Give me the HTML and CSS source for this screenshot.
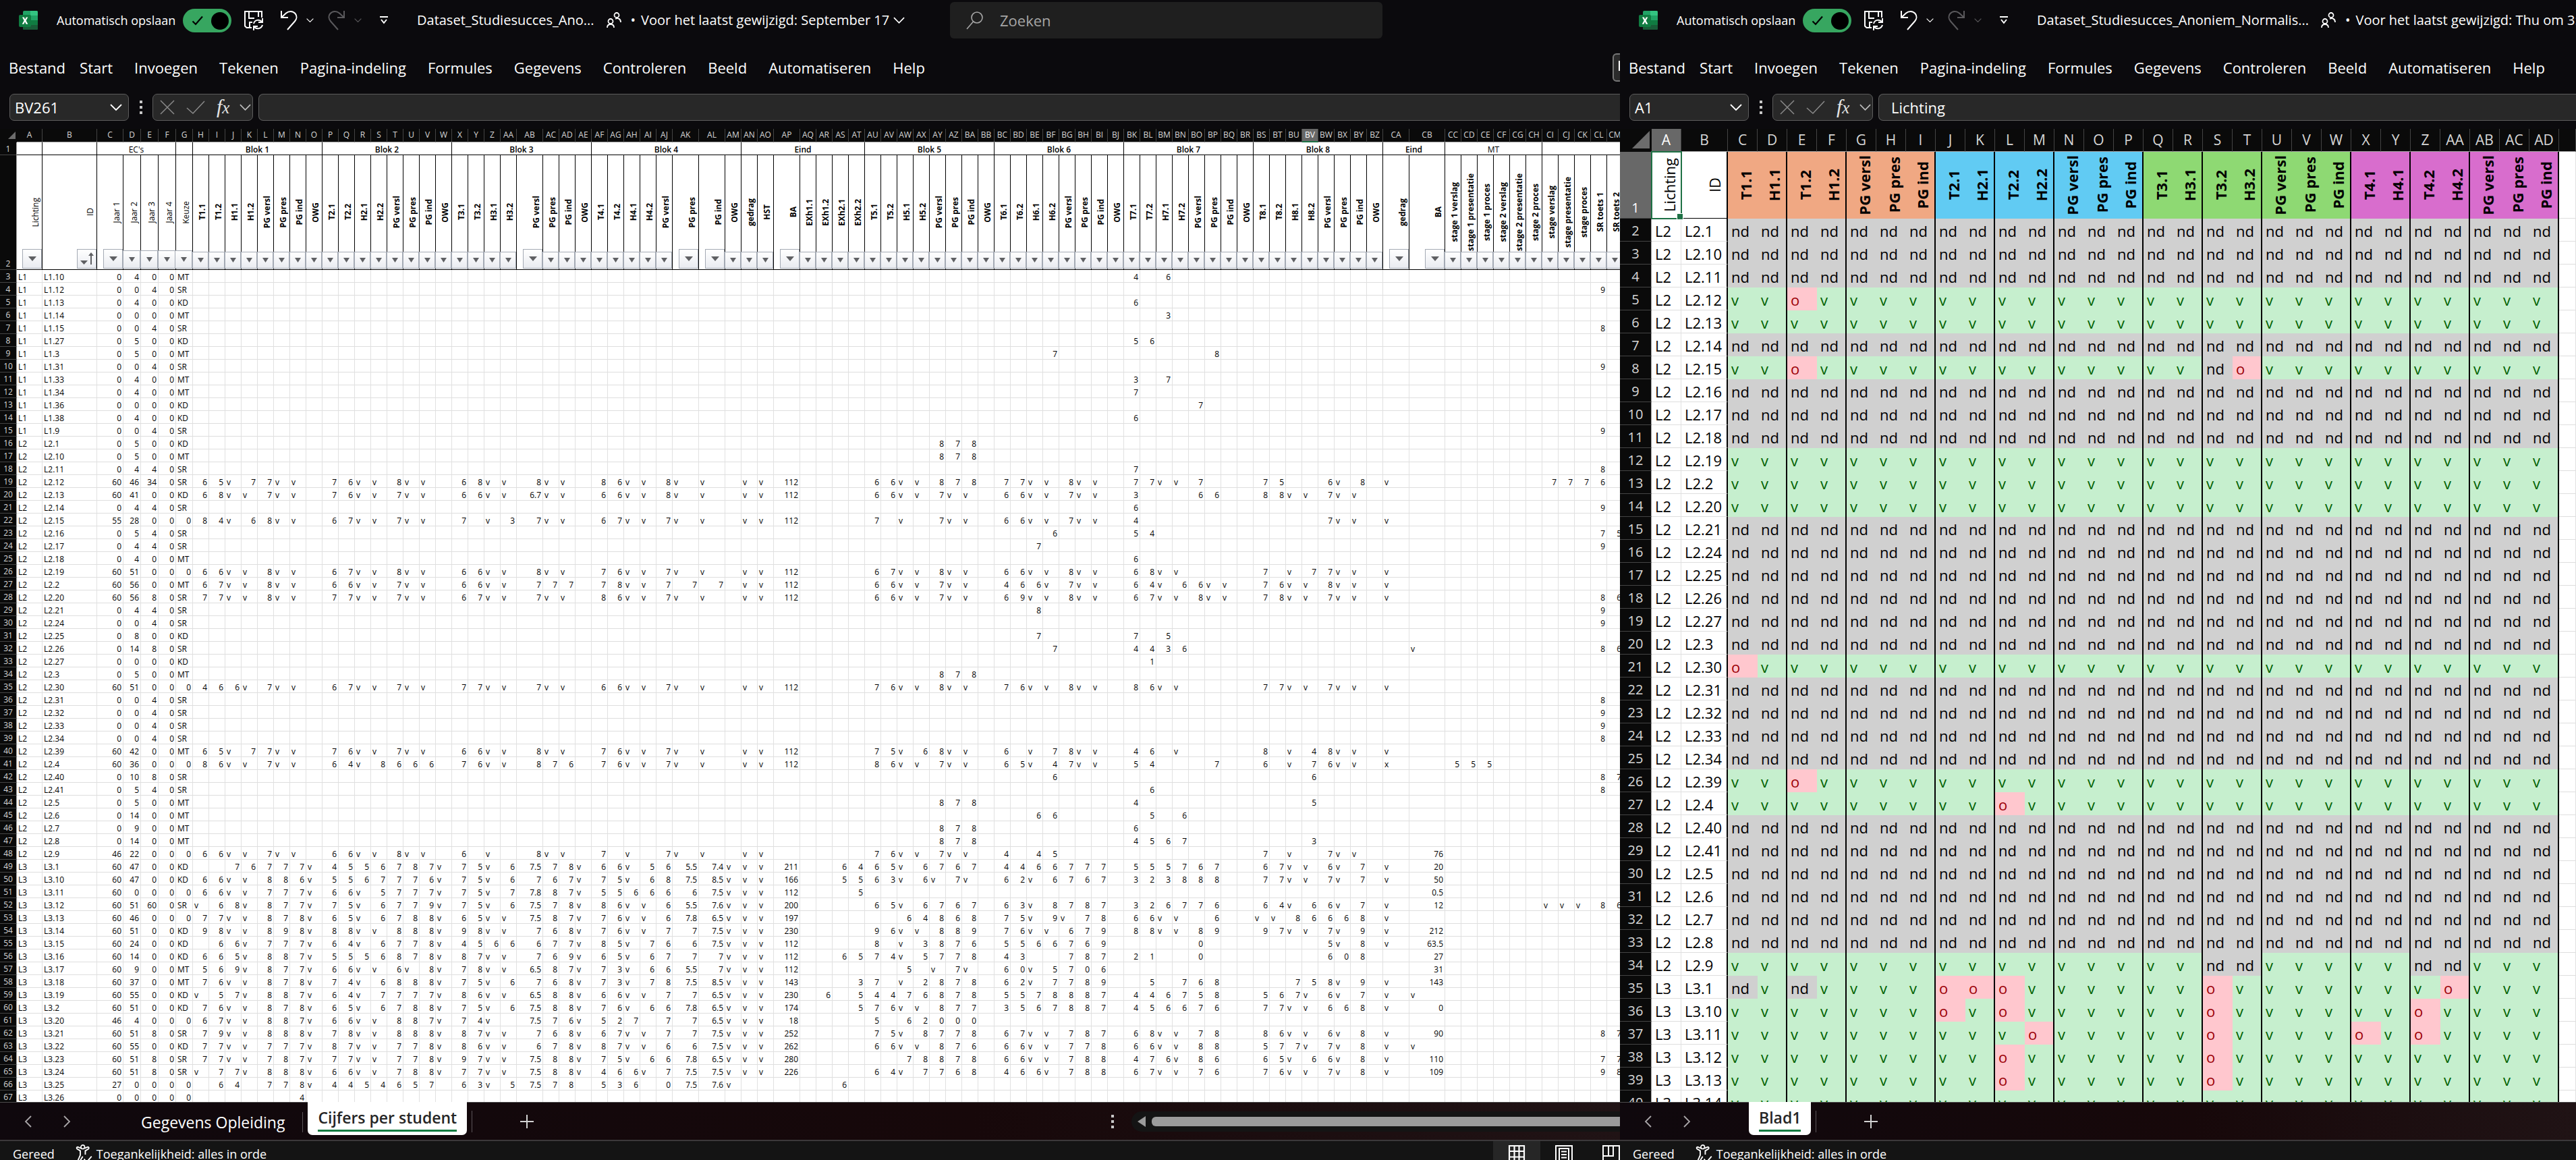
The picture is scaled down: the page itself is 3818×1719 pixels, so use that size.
FILE: index.html
```html
<!DOCTYPE html>
<html lang="nl">
<head>
<meta charset="utf-8">
<title>Dataset_Studiesucces</title>
<link rel="stylesheet" href="styles.css">
</head>
<body>
<svg class="sprite" aria-hidden="true">
  <symbol id="i-excel" viewBox="0 0 28 28">
    <rect x="6" y="0" width="22" height="28" rx="2" fill="#21a366"/>
    <path d="M17 0h9a2 2 0 0 1 2 2v5H17z" fill="#33c481"/>
    <path d="M6 7h11v7H6z" fill="#107c41"/>
    <path d="M17 14h11v7H17z" fill="#107c41"/>
    <path d="M6 14h11v7H6zM6 21h22v5a2 2 0 0 1-2 2H8a2 2 0 0 1-2-2z" fill="#185c37"/>
    <rect x="0" y="6" width="18" height="18" rx="2" fill="#107c41"/>
    <path d="M5 9.500h2.700l1.500 3.200 1.600-3.200h2.500L10.600 14.500l2.800 5.200h-2.700L9 16.300l-1.700 3.400H4.700l2.900-5.200z" fill="#fff"/>
  </symbol>
  <symbol id="i-check" viewBox="0 0 18 15"><path d="M1.500 8.500 6 13 16 1.500" fill="none" stroke="currentColor" stroke-width="2.200"/></symbol>
  <symbol id="i-save" viewBox="0 0 30 30">
    <path d="M12 26H4.500L2 23.500V2h25v9M8 2v10h8M22 2v8M9 26v-8h4" fill="none" stroke="currentColor" stroke-width="2"/>
    <path d="M15 20a7 7 0 0 1 12-3M28 12v6h-6M28 22a7 7 0 0 1-12 3M15 30v-6h6" fill="none" stroke="currentColor" stroke-width="2"/>
  </symbol>
  <symbol id="i-undo" viewBox="0 0 26 30"><path d="M2 1v10h10M2 11 9 4.500C13 1 19 1 22.500 5c3 3.500 2.500 8-.5 11.500L11 29" fill="none" stroke="currentColor" stroke-width="2"/></symbol>
  <symbol id="i-redo" viewBox="0 0 26 30"><path d="M24 1v10H14M24 11l-7-6.500C13 1 7 1 3.500 5c-3 3.500-2.500 8 .5 11.500L15 29" fill="none" stroke="currentColor" stroke-width="2"/></symbol>
  <symbol id="i-chev" viewBox="0 0 18 12"><path d="M1 2l8 8 8-8" fill="none" stroke="currentColor" stroke-width="1.800"/></symbol>
  <symbol id="i-more" viewBox="0 0 14 14"><path d="M1 2h12M3 6l4 5 4-5" fill="none" stroke="currentColor" stroke-width="2"/></symbol>
  <symbol id="i-share" viewBox="0 0 22 24">
    <path d="M6 10a3.500 3.500 0 1 1 0 7 3.500 3.500 0 0 1 0-7zM1 23c0-3 2-5 5-5s5 2 5 5M15 1a3.500 3.500 0 1 1 0 7 3.500 3.500 0 0 1 0-7zM13 10c4-2 8 0 8 5" fill="none" stroke="currentColor" stroke-width="1.800"/>
  </symbol>
  <symbol id="i-search" viewBox="0 0 26 28"><path d="M16 2a8 8 0 1 1 0 16 8 8 0 0 1 0-16zM10.500 16 1 27" fill="none" stroke="currentColor" stroke-width="1.600"/></symbol>
  <symbol id="i-cross" viewBox="0 0 22 22"><path d="M1 1l20 20M21 1 1 21" fill="none" stroke="currentColor" stroke-width="1.500"/></symbol>
  <symbol id="i-tick" viewBox="0 0 28 22"><path d="M1 12l9 8L27 2" fill="none" stroke="currentColor" stroke-width="1.500"/></symbol>
  <symbol id="i-left" viewBox="0 0 12 18"><path d="M10 1 2 9l8 8" fill="none" stroke="currentColor" stroke-width="1.800"/></symbol>
  <symbol id="i-right" viewBox="0 0 12 18"><path d="M2 1l8 8-8 8" fill="none" stroke="currentColor" stroke-width="1.800"/></symbol>
  <symbol id="i-plus" viewBox="0 0 20 20"><path d="M10 0v20M0 10h20" fill="none" stroke="currentColor" stroke-width="2"/></symbol>
  <symbol id="i-access" viewBox="0 0 28 30">
    <path d="M11 1a3 3 0 1 1 0 6 3 3 0 0 1 0-6z" fill="none" stroke="currentColor" stroke-width="1.800"/>
    <path d="M8 6 3 4C1 4 1 6 2 7l5 3v7L3 26c0 2 2 3 3 1l5-8M14 6l5-2c2 0 2 2 1 3l-5 3v6M13 23l4 5 8-9" fill="none" stroke="currentColor" stroke-width="2"/>
  </symbol>
  <symbol id="i-grid" viewBox="0 0 24 28"><path d="M1 1h22v26H1zM8.500 1v26M15.500 1v26M1 9h22M1 17.500h22" fill="none" stroke="currentColor" stroke-width="2.200"/></symbol>
  <symbol id="i-page" viewBox="0 0 26 28"><path d="M1 1h24v26H1zM6 5h14v18H6zM9 9.500h8M9 14h8M9 18.500h8" fill="none" stroke="currentColor" stroke-width="2"/></symbol>
  <symbol id="i-break" viewBox="0 0 26 28"><path d="M1 1h24v26H1zM1 16h15V1M9 1v15" fill="none" stroke="currentColor" stroke-width="2"/></symbol>
</svg>

<main class="desk">
  <section class="window" aria-label="Cijfers per student">
    <header class="titlebar">
      <div class="title-main">
        <svg class="logo"><use href="#i-excel"/></svg>
        <label class="autosave" for="auto-a">Automatisch opslaan</label>
        <span class="switch"><input type="checkbox" id="auto-a" checked><svg><use href="#i-check"/></svg></span>
        <button class="tool save" aria-label="Opslaan"><svg><use href="#i-save"/></svg></button>
        <button class="tool undo" aria-label="Ongedaan maken"><svg><use href="#i-undo"/></svg></button>
        <button class="tool drop" aria-label="Lijst ongedaan maken"><svg><use href="#i-chev"/></svg></button>
        <button class="tool redo" aria-label="Opnieuw" disabled><svg><use href="#i-redo"/></svg></button>
        <button class="tool drop" aria-label="Lijst opnieuw" disabled><svg><use href="#i-chev"/></svg></button>
        <button class="tool more" aria-label="Werkbalk aanpassen"><svg><use href="#i-more"/></svg></button>
        <span class="filename">Dataset_Studiesucces_Ano...</span>
        <svg class="share"><use href="#i-share"/></svg>
        <span class="dot">•</span>
        <button class="modified">Voor het laatst gewijzigd: September 17 <svg><use href="#i-chev"/></svg></button>
      </div>
      <label class="search"><svg><use href="#i-search"/></svg><input type="search" placeholder="Zoeken" aria-label="Zoeken"></label>
    </header>
    <nav class="ribbon">
      <a class="first" href="#">Bestand</a><a href="#">Start</a><a href="#">Invoegen</a><a href="#">Tekenen</a><a href="#">Pagina-indeling</a><a href="#">Formules</a><a href="#">Gegevens</a><a href="#">Controleren</a><a href="#">Beeld</a><a href="#">Automatiseren</a><a href="#">Help</a>
      <button class="comments" aria-label="Opmerkingen"><svg viewBox="0 0 20 20"><path d="M1 1h18v13H8l-5 5v-5H1z" fill="none" stroke="currentColor" stroke-width="2"/></svg></button>
    </nav>
    <div class="formula">
      <div class="namebox"><input value="BV261" aria-label="Naamvak"><svg><use href="#i-chev"/></svg></div>
      <span class="dots"><i></i><i></i><i></i></span>
      <div class="fx"><svg class="cross"><use href="#i-cross"/></svg><svg class="tick"><use href="#i-tick"/></svg><span>f<small>x</small></span><svg class="chev"><use href="#i-chev"/></svg></div>
      <input class="entry" aria-label="Formulebalk">
    </div>
    <div class="sheet"><table class="grid small" id="grades"></table></div>
    <footer class="tabs">
      <button class="arrow" aria-label="Vorige"><svg><use href="#i-left"/></svg></button>
      <button class="arrow" aria-label="Volgende"><svg><use href="#i-right"/></svg></button>
      <button class="tab wide">Gegevens Opleiding</button>
      <button class="tab active after">Cijfers per student</button>
      <button class="add" aria-label="Nieuw blad"><svg><use href="#i-plus"/></svg></button>
      <span class="dots"><i></i><i></i><i></i></span>
      <div class="scroll"><b></b><i></i></div>
    </footer>
    <div class="status">
      <span>Gereed</span><svg class="access"><use href="#i-access"/></svg><span>Toegankelijkheid: alles in orde</span>
      <div class="views">
        <button class="on" aria-label="Normaal"><svg><use href="#i-grid"/></svg></button><button aria-label="Pagina-indeling"><svg><use href="#i-page"/></svg></button><button aria-label="Pagina-einde"><svg><use href="#i-break"/></svg></button>
      </div>
    </div>
  </section>

  <section class="window" aria-label="Blad1">
    <header class="titlebar">
      <div class="title-main">
        <svg class="logo"><use href="#i-excel"/></svg>
        <label class="autosave" for="auto-b">Automatisch opslaan</label>
        <span class="switch"><input type="checkbox" id="auto-b" checked><svg><use href="#i-check"/></svg></span>
        <button class="tool save" aria-label="Opslaan"><svg><use href="#i-save"/></svg></button>
        <button class="tool undo" aria-label="Ongedaan maken"><svg><use href="#i-undo"/></svg></button>
        <button class="tool drop" aria-label="Lijst ongedaan maken"><svg><use href="#i-chev"/></svg></button>
        <button class="tool redo" aria-label="Opnieuw" disabled><svg><use href="#i-redo"/></svg></button>
        <button class="tool drop" aria-label="Lijst opnieuw" disabled><svg><use href="#i-chev"/></svg></button>
        <button class="tool more" aria-label="Werkbalk aanpassen"><svg><use href="#i-more"/></svg></button>
        <span class="filename">Dataset_Studiesucces_Anoniem_Normalis...</span>
        <svg class="share"><use href="#i-share"/></svg>
        <span class="dot">•</span>
        <button class="modified">Voor het laatst gewijzigd: Thu om 3:41 PM</button>
      </div>
    </header>
    <nav class="ribbon">
      <a class="first" href="#">Bestand</a><a href="#">Start</a><a href="#">Invoegen</a><a href="#">Tekenen</a><a href="#">Pagina-indeling</a><a href="#">Formules</a><a href="#">Gegevens</a><a href="#">Controleren</a><a href="#">Beeld</a><a href="#">Automatiseren</a><a href="#">Help</a>
    </nav>
    <div class="formula">
      <div class="namebox"><input value="A1" aria-label="Naamvak"><svg><use href="#i-chev"/></svg></div>
      <span class="dots"><i></i><i></i><i></i></span>
      <div class="fx"><svg class="cross"><use href="#i-cross"/></svg><svg class="tick"><use href="#i-tick"/></svg><span>f<small>x</small></span><svg class="chev"><use href="#i-chev"/></svg></div>
      <input class="entry" value="Lichting" aria-label="Formulebalk">
    </div>
    <div class="sheet"><table class="grid large" id="results"></table></div>
    <footer class="tabs">
      <button class="arrow" aria-label="Vorige"><svg><use href="#i-left"/></svg></button>
      <button class="arrow" aria-label="Volgende"><svg><use href="#i-right"/></svg></button>
      <button class="tab active only">Blad1</button>
      <button class="add" aria-label="Nieuw blad"><svg><use href="#i-plus"/></svg></button>
    </footer>
    <div class="status">
      <span>Gereed</span><svg class="access"><use href="#i-access"/></svg><span>Toegankelijkheid: alles in orde</span>
    </div>
  </section>
</main>
<script src="sheets.js"></script>
</body>
</html>
```
FILE: styles.css
```css
* { box-sizing: border-box; }

body {
  margin: 0;
  background: #0a0a0b;
  color: #fff;
  font: 22px/30px "Open Sans", "Noto Sans", sans-serif;
  overflow: hidden;
}

button, input { font: inherit; color: inherit; background: none; border: 0; padding: 0; margin: 0; outline: 0; }
svg { display: block; flex: none; }
.sprite { display: none; }

.desk {
  display: grid;
  grid-template-columns: minmax(0, 2401fr) minmax(0, 1417fr);
  height: 100vh;
}

.window {
  display: flex;
  flex-direction: column;
  min-width: 0;
  overflow: hidden;
  background: #0b0a0d;
}

/* Title bar */
.titlebar { display: flex; align-items: center; height: 60px; flex: none; white-space: nowrap; }
.title-main { display: flex; align-items: center; flex: 1 0 1408px; padding-left: 28px; }
.titlebar:has(.search) .title-main { flex: 0 0 1408px; }
.logo { width: 28px; height: 28px; }
.autosave { margin-left: 28px; width: 177px; font-size: 18px; }
.switch { position: relative; margin-left: 10px; width: 72px; height: 35px; }
.switch input { appearance: none; display: block; width: 72px; height: 35px; border-radius: 18px; background: #37a660; }
.switch input::after { content: ""; position: absolute; right: 4px; top: 5px; width: 26px; height: 26px; border-radius: 50%; background: #000; }
.switch svg { position: absolute; left: 13px; top: 10px; width: 18px; height: 15px; color: #000; }
.tool svg { width: 100%; height: 100%; }
.tool:disabled { color: #5a595c; }
.save { width: 30px; height: 30px; margin-left: 18px; }
.undo { width: 26px; height: 30px; margin-left: 24px; }
.redo { width: 26px; height: 30px; margin-left: 21px; }
.drop { width: 11px; height: 8px; margin-left: 13px; }
.more { width: 14px; height: 14px; margin-left: 26px; }
.filename { margin-left: 42px; font-size: 20px; }
.share { width: 22px; height: 24px; margin-left: 18px; }
.dot { margin-left: 14px; font-size: 20px; }
.modified { display: flex; align-items: center; gap: 6px; margin-left: 8px; font-size: 20px; }
.modified svg { width: 17px; height: 12px; }
.search {
  display: flex; align-items: center; flex: 0 1 641px; height: 54px;
  padding-left: 24px; gap: 24px; border-radius: 6px; background: #1f1f1f; color: #a6a6a6;
}
.search svg { width: 26px; height: 28px; }
.search input { flex: 1; appearance: none; }
.search input::placeholder { color: #a6a6a6; opacity: 1; }

/* Ribbon */
.ribbon { display: flex; align-items: center; gap: 32px; height: 65px; flex: none; padding: 15px 0 0 13px; white-space: nowrap; }
.ribbon a { color: #fff; text-decoration: none; }
.ribbon .first { margin-right: -11px; }
.comments { margin-left: auto; margin-right: -34px; width: 45px; height: 42px; border: 2px solid #777; border-radius: 6px; background: #2b2b2b; padding-left: 7px; }
.comments svg { width: 20px; height: 20px; }

/* Formula bar */
.formula { display: flex; align-items: center; height: 66px; flex: none; padding: 14px 0 12px 14px; }
.namebox, .fx, .entry { height: 40px; border: 1px solid #5c5c5c; border-radius: 7px; background: #282828; }
.namebox { display: flex; align-items: center; width: 177px; padding: 0 9px 0 7px; }
.namebox input { flex: 1; min-width: 0; }
.namebox svg { width: 18px; height: 12px; }
.dots { display: grid; gap: 4px; width: 4px; }
.dots i { width: 4px; height: 4px; background: #c8c8c8; }
.formula .dots { margin: 0 15px 0 16px; }
.fx { display: flex; align-items: center; width: 149px; padding-left: 10px; color: #8a8a8a; }
.fx .cross { width: 22px; height: 22px; }
.fx .tick { width: 28px; height: 22px; margin-left: 17px; }
.fx span { width: 25px; margin-left: 17px; font: italic 30px/34px "Liberation Serif", serif; color: #e4e4e4; white-space: nowrap; }
.fx small { font-size: 25px; }
.fx .chev { width: 17px; height: 12px; margin-left: 9px; color: #bdbdbd; }
.entry { flex: 1; min-width: 0; margin-left: 8px; padding-left: 18px; border-right: 0; border-radius: 7px 0 0 7px; }

/* Sheets */
.sheet { flex: 1; min-height: 0; overflow: hidden; background: #fff; }
.grid { table-layout: fixed; width: 100%; border-collapse: separate; border-spacing: 0; color: #000; }
.grid th, .grid td { padding: 0; white-space: nowrap; font-weight: 400; text-align: left; vertical-align: top; }
.grid td { border-right: 1px solid #e1e1e1; border-bottom: 1px solid #dedede; }
.grid th.col, .grid th.row, .grid th.corner { background: #0a0a0a; color: #d6d6d6; text-align: center; }
.grid th.col { border-right: 1px solid #444; border-bottom: 1px solid #a0a0a0; }
.grid th.row { border-right: 1px solid #a0a0a0; border-bottom: 1px solid #444; vertical-align: bottom; }
.grid th.picked { background: #686868; color: #fff; }
.corner::after { content: ""; display: block; margin: 4px 2px 0 auto; width: 11px; height: 11px; background: #6c6c6c; clip-path: polygon(100% 0, 100% 100%, 0 100%); }
.side { writing-mode: vertical-rl; transform: rotate(180deg); }
.head { display: flex; align-items: center; justify-content: flex-end; position: relative; }

.small { font-size: 12px; line-height: 15px; }
.small th.col { height: 19px; line-height: 18px; }
.small th.row { line-height: 17px; }
.small th.picked { border-bottom: 2px solid #1e7145; }
.small td { height: 19px; padding: 3px 2px 0 2px; }
.small td.num { text-align: right; }
.small td.group { text-align: center; border-color: #000; font-weight: 600; }
.small td.group.plain, .small .plain .side { font-weight: 400; }
.small td.label { padding: 0; border-color: #000; height: 170px; font-weight: 700; }
.small .head { height: 169px; padding-right: 1px; }
.small .side { line-height: 16px; }
.filter {
  position: absolute; right: 0; bottom: 1px; width: 24px; height: 25px;
  display: flex; align-items: center; justify-content: center;
  border: 1px solid #a4aab4; background: linear-gradient(#fff, #e9ebf0);
}
.filter svg { width: 9px; height: 7px; fill: #5f6063; }
.filter.mid { width: 26px; height: 27px; }
.filter.big { width: 29px; height: 29px; }
.filter.big svg { width: 12px; height: 7px; }
.filter.big svg.sort { width: 24px; height: 24px; }

.large { font-size: 22px; line-height: 30px; }
.large .corner::after { margin: 3px 3px 0 auto; width: 26px; height: 26px; }
.large th.col { height: 34px; font-size: 21px; line-height: 33px; }
.large th.row { font-size: 20px; }
.large td { height: 34px; padding: 3px 0 0 5px; }
.large td.label { padding: 0; height: 99px; border-bottom: 0; border-right: 0; font-weight: 700; }
.large td.label.plain { font-weight: 400; border-bottom: 1px solid #000; }
.large .head { height: 98px; padding-right: 3px; }
.large .side { line-height: 30px; }
.large td.nd { background: #d0d0d0; border: 0; }
.large td.v { background: #c6efce; color: #006100; border: 0; }
.large td.o { background: #ffc7ce; color: #9c0006; border: 0; }
.large td.edge { border-right: 2px solid #000; }
.large td.b1 { background: #f0a883; }
.large td.b2 { background: #61cbf3; }
.large td.b3 { background: #8ed973; }
.large td.b4 { background: #d86dcd; }
.large td.current { position: relative; outline: 2px solid #1e7145; outline-offset: -1px; z-index: 1; border: 0; }
.large td.current::after { content: ""; position: absolute; right: -3px; bottom: -3px; width: 8px; height: 8px; background: #1e7145; border: 1px solid #fff; }

/* Sheet tabs */
.tabs {
  display: flex; align-items: center; height: 56px; flex: none; padding-left: 36px;
  border-top: 1px solid #4c4c4c; background: linear-gradient(90deg, #0f080d, #17080a 60%, #201315);
  font-size: 23px; white-space: nowrap;
}
.arrow { width: 14px; height: 18px; color: #a9a6a8; }
.arrow svg { width: 12px; height: 18px; }
.arrow + .arrow { margin-left: 43px; }
.tab.wide { margin: 2px 7px 0 102px; padding-right: 26px; border-right: 1px solid #5a5458; }
.tab.active {
  align-self: flex-start; position: relative; height: 49px; margin-top: -1px; padding: 0 15px 3px;
  border-radius: 0 0 7px 7px; background: #fff; color: #262626; font-weight: 600;
}
.tab.active::after { content: ""; position: absolute; left: 15px; right: 15px; bottom: 5px; height: 3px; background: #107c41; }
.tab.only { margin-left: 84px; }
.add { width: 81px; margin-left: 7px; height: 32px; padding-left: 71px; border-left: 1px solid #5a5458; color: #d2d2d2; }
.add svg { width: 20px; height: 20px; }
.tabs .dots { margin-left: auto; margin-right: 26px; }
.scroll { display: flex; align-items: center; width: 724px; height: 30px; padding-left: 9px; border-radius: 15px 0 0 15px; background: #141414; }
.scroll b { border: 8px solid transparent; border-right: 12px solid #9b9b9b; border-left: 0; }
.scroll i { flex: 1; height: 14px; margin-left: 9px; border-radius: 6px 0 0 6px; background: #9b9b9b; }

/* Status bar */
.status { display: flex; align-items: flex-start; height: 30px; flex: none; overflow: hidden; padding: 5px 0 0 19px; border-top: 2px solid #3b383a; background: #141414; font-size: 18px; line-height: 28px; white-space: nowrap; }
.access { width: 27px; height: 28px; margin: 0 4px 0 31px; }
.views { display: flex; margin: -5px 0 0 auto; }
.views button { width: 70px; height: 34px; padding: 6px 22px 0; }
.views button:last-child { width: 48px; padding-right: 0; }
.views .on { background: #262626; }
.views svg { width: 26px; height: 28px; }
```
FILE: sheets.js
```js
const columnName = i => (i >= 26 ? String.fromCharCode(64 + Math.floor(i / 26)) : "") + String.fromCharCode(65 + i % 26);
const columnIndex = name => [...name].reduce((n, c) => n * 26 + c.charCodeAt(0) - 64, 0) - 1;

function colgroup(widths) {
  return "<colgroup>" + widths.map(w => w ? `<col style="width:${w}px">` : "<col>").join("") + "</colgroup>";
}

/* ---- Grades per student ---- */
const blok = n => [`T${n}.1`, `T${n}.2`, `H${n}.1`, `H${n}.2`, "PG versl", "PG pres", "PG ind", "OWG"];
const labels = ["Lichting", "ID", "Jaar 1", "Jaar 2", "Jaar 3", "Jaar 4", "Keuze",
  ...blok(1), ...blok(2), ...blok(3), ...blok(4),
  "gedrag", "HST", "BA", "EXh1.1", "EXh1.2", "EXh2.1", "EXh2.2",
  ...blok(5), ...blok(6), ...blok(7), ...blok(8), "gedrag", "BA",
  "stage 1 verslag", "stage 1 presentatie", "stage 1 proces",
  "stage 2 verslag", "stage 2 presentatie", "stage 2 proces",
  "stage verslag", "stage presentatie", "stage proces", "SR toets 1", "SR toets 2"];
const groups = [["", 1], ["", 1], ["EC's", 4, 1], ["", 1], ["Blok 1", 8], ["Blok 2", 8], ["Blok 3", 8], ["Blok 4", 8],
  ["Eind", 7], ["Blok 5", 8], ["Blok 6", 8], ["Blok 7", 8], ["Blok 8", 8], ["Eind", 2], ["MT", 6, 1], ["", 5]];
const special = { A: 38, B: 81, C: 39, D: 26, E: 26, F: 26, G: 25, AB: 39, AK: 39, AL: 39, AP: 39, CA: 39, CB: 53 };

const grades = `L1 L1.10 0 4 0 0 MT; BK 4 . 6
L1 L1.12 0 0 4 0 SR; CL 9
L1 L1.13 0 4 0 0 KD; BK 6
L1 L1.14 0 0 0 0 MT; BM 3
L1 L1.15 0 0 4 0 SR; CL 8
L1 L1.27 0 5 0 0 KD; BK 5 6
L1 L1.3 0 5 0 0 MT; BF 7; BP 8
L1 L1.31 0 0 4 0 SR; CL 9
L1 L1.33 0 4 0 0 MT; BK 3 . 7
L1 L1.34 0 4 0 0 MT; BK 7
L1 L1.36 0 0 0 0 KD; BO 7
L1 L1.38 0 4 0 0 KD; BK 6
L1 L1.9 0 0 4 0 SR; CL 9
L2 L2.1 0 5 0 0 KD; AY 8 7 8
L2 L2.10 0 5 0 0 MT; AY 8 7 8
L2 L2.11 0 4 4 0 SR; BK 7; CL 8
L2 L2.12 60 46 34 0 SR 6 5 v 7 7 v v . 7 6 v v 8 v v . 6 8 v v 8 v v . 8 6 v v 8 v v . v v 112; AU 6 6 v v 8 7 8 . 7 7 v v 8 v v . 7 7 v v 7; BS 7 5 . . 6 v 8 . v; CI 7 7 7 6
L2 L2.13 60 41 0 0 KD 6 8 v v 7 v v . 7 6 v v 7 v v . 6 6 v v 6.7 v v . 6 6 v v 8 v v . v v 112; AU 6 6 v v 7 v v . 6 6 v v 7 v v . 3 . . . 6 6; BS 8 8 v v 7 v v
L2 L2.14 0 4 4 0 SR; BK 6; CL 9
L2 L2.15 55 28 0 0 0 8 4 v 6 8 v v . 6 7 v v 7 v v . 7 . v 3 7 v v . 6 7 v v 7 v v . v v 112; AU 7 . v . 7 v v . 6 6 v v 7 v v . 4; BW 7 v v . v
L2 L2.16 0 5 4 0 SR; BF 6; BK 5 4; CL 7 5
L2 L2.17 0 4 4 0 SR; BE 7; CL 9
L2 L2.18 0 4 0 0 MT; BK 6
L2 L2.19 60 51 0 0 0 6 6 v v 8 v v . 6 7 v v 8 v v . 6 6 v v 8 v v . 7 6 v v 7 v v . v v 112; AU 6 7 v v 8 v v . 6 6 v v 8 v v . 6 8 v v; BS 7 . v 7 7 v v . v
L2 L2.2 60 56 0 0 MT 6 7 v v 8 v v . 6 6 v v 7 v v . 6 6 v v 7 7 7 . 7 8 v v 7 7 7 . v v 112; AU 6 6 v v 7 v v . 4 6 6 v 7 v v . 6 4 v 6 6 v v . 7 6 v v 8 v v . v
L2 L2.20 60 56 8 0 SR 7 7 v v 8 v v . 7 7 v v 7 v v . 6 7 v v 7 v v . 8 6 v v 7 v v . v v 112; AU 6 6 v v 7 v v . 6 9 v v 8 v v . 6 7 v v 8 v v . 7 8 v v 7 v v . v; CL 8 6
L2 L2.21 0 4 4 0 SR; BE 8; CL 9
L2 L2.24 0 0 4 0 SR; CL 9
L2 L2.25 0 8 0 0 KD; BE 7; BK 7 . 5
L2 L2.26 0 14 8 0 SR; BF 7; BK 4 4 3 6; CB v; CL 8 6
L2 L2.27 0 0 0 0 KD; BL 1
L2 L2.3 0 5 0 0 MT; AY 8 7 8
L2 L2.30 60 51 0 0 0 4 6 6 v 7 v v . 6 7 v v 7 v v . 7 7 v v 7 v v . 6 6 v v 7 v v . v v 112; AU 7 6 v v 8 v v . 7 6 v v 8 v v . 8 6 v v; BS 7 7 v v 7 v v . v
L2 L2.31 0 0 4 0 SR; CL 8
L2 L2.32 0 0 4 0 SR; CL 9
L2 L2.33 0 0 4 0 SR; CL 9
L2 L2.34 0 0 4 0 SR; CL 8
L2 L2.39 60 42 0 0 MT 6 5 v 7 7 v v . 7 6 v v 7 v v . 6 6 v v 8 v v . 7 6 v v 7 v v . v v 112; AU 7 5 v 6 8 v v . 6 . v 7 8 v v . 4 6 . v; BS 8 . v 4 8 v v . v
L2 L2.4 60 36 0 0 0 8 6 v v 7 v v . 6 4 v 8 6 6 6 . 7 6 v v 8 7 6 . 7 6 v v 7 v v . v v 112; AU 8 6 v v 7 v v . 6 5 v 4 7 v v . 5 4 . . . 7; BS 6 . v 7 6 v v . x; CC 5 5 5
L2 L2.40 0 10 8 0 SR; BF 6; BV 6; CL 8 7
L2 L2.41 0 5 4 0 SR; BL 6; CL 8
L2 L2.5 0 5 0 0 MT; AY 8 7 8; BK 4; BV 5
L2 L2.6 0 14 0 0 MT; BE 6 6; BL 5 . 6
L2 L2.7 0 9 0 0 MT; AY 8 7 8; BK 6
L2 L2.8 0 14 0 0 MT; AY 8 7 8; BK 4 5 6 7; BV 3
L2 L2.9 46 22 0 0 0 6 6 v v 7 v v . 6 6 v v 8 v v . 6 . v . 8 v v . 7 . v . 7 v v . v v; AU 7 6 v v 7 v v . 4 . 4 5; BS 7 . v . 7 v v; CB 76
L3 L3.1 60 47 0 0 KD . . 7 6 7 7 7 v 4 5 5 6 7 8 7 v 7 5 v 6 7.5 7 8 v 6 6 v 5 6 5.5 7.4 v v v 211; AS 6 4 6 5 v 6 7 6 7 . 4 4 6 6 7 7 7 . 5 5 5 7 6 7; BS 6 7 v v 6 v 7 . v 20
L3 L3.10 60 47 0 0 KD 6 6 v v 8 8 6 v 5 5 6 7 7 7 6 v 7 5 v 6 7 6 7 v 7 5 v 6 8 7.5 8.5 v v v 166; AS 5 5 6 3 v 6 v 7 v . 6 2 v 6 7 6 7 . 3 2 3 8 8 8; BS 7 7 v v 7 v 7 . v 50
L3 L3.11 60 0 0 0 0 6 6 v v 7 7 7 v 6 6 v 5 7 7 7 v 7 5 v 7 7.8 8 7 v 5 5 6 6 6 6 7.5 v v v 112; AT 5; CB 0.5
L3 L3.12 60 51 60 0 SR v 6 8 v 8 7 7 v 7 5 v 6 7 7 9 v 7 5 v 6 7.5 7 8 v 8 6 v v 6 5.5 7.6 v v v 200; AU 6 5 v 6 7 6 7 . 6 3 v 8 7 8 7 . 3 2 6 7 7 6; BS 6 4 v 6 6 v 7 . v 12; CI v v v 8 6
L3 L3.13 60 46 0 0 0 7 7 v v 8 7 8 v 6 5 v 6 7 8 8 v 6 5 v v 7.5 8 7 v 7 6 v v 6 7.8 6.5 v v v 197; AW 6 4 8 6 8 . 7 5 v 9 v 7 8 . 6 6 v v . 6; BS v v 8 6 6 6 8 . v
L3 L3.14 60 51 0 0 KD 9 8 v v 8 9 8 v 8 8 v v 8 8 8 v 9 8 v v 7 6 8 v 7 6 v v 7 7 7.5 v v v 230; AU 9 6 v v 8 8 9 . 7 6 v v 6 7 9 . 8 8 v v 8 9; BS 9 7 v v 7 v 9 . v 212
L3 L3.15 60 24 0 0 KD . 6 6 v 7 7 7 v 6 4 v 6 7 7 8 v 4 5 6 6 6 7 7 v 8 5 v 7 6 6 7.5 v v v 112; AU 8 . v 3 8 7 6 . 5 5 6 6 7 6 9; BO 0; BW 5 v 8 . v 63.5
L3 L3.16 60 14 0 0 KD 6 6 5 v 8 8 7 v 5 5 5 6 8 7 8 v 8 7 v v 7 6 9 v 6 5 v 6 7 7 7 v v v 112; AS 6 5 7 4 v 5 7 7 8 . 4 3 . . 7 8 7 . 2 1 . . 0; BW 6 0 8; CB 27
L3 L3.17 60 9 0 0 MT 5 6 9 v 8 7 7 v 6 6 v v 6 v 8 v 7 8 v v 6.5 8 7 v 7 3 v 6 6 5.5 7 v v v 112; AW 5 . v 7 v . 6 0 v 5 7 0 6; CB 31
L3 L3.18 60 37 0 0 MT 7 6 v v 8 7 8 v 7 4 v 6 8 8 8 v 7 5 v 6 7 6 8 v 7 3 v 7 8 7.5 8.5 v v v 143; AT 3 7 . v 2 8 7 8 . 6 2 v 7 7 8 9; BL 5 . 7 6 8; BU 7 5 8 v 9 . v 143
L3 L3.19 60 55 0 0 KD v 5 7 v 8 8 7 v 6 4 v 7 7 7 7 v 8 6 v v 6.5 8 8 v 6 6 v v 7 7 6.5 v v v 230; AR 6 . 5 4 4 7 6 8 7 8 . 5 5 7 8 8 8 7 . 4 4 6 7 5 8; BS 5 6 7 v 6 v 7 . v v
L3 L3.2 60 51 0 0 KD 7 6 v v 8 7 8 v 6 5 v 6 7 8 8 v 7 5 v 6 7.5 8 8 v 7 6 v 6 6 7.8 6.5 v v v 174; AT 5 7 6 v v 8 7 7 . 3 5 6 7 8 8 7 . 4 5 6 6 7 6; BS 7 7 v v 6 6 8 . v 0
L3 L3.20 46 4 0 0 0 6 7 v v 8 8 7 v 6 6 v v 8 8 7 v 7 4 v . 7.5 7 6 v 5 2 7 . 7 7 6.5 v v v 18; AU 5 . 6 2 0 0 0
L3 L3.21 60 51 8 0 SR 7 9 v v 8 8 8 v 7 8 v v 8 8 8 v 8 7 v v 7 6 8 v 6 7 v v 7 7 7.5 v v v 252; AU 7 5 v 8 7 7 8 . 6 7 v v 7 8 7 . 6 8 v v 7 8; BS 8 6 v v 6 v 8 . v 90; CL 8 7
L3 L3.22 60 55 0 0 KD 7 7 v v 7 7 7 v 8 7 v v 7 7 8 v 8 6 v v 6 7 8 v 8 7 v v 6 6 7.5 v v v 262; AU 6 6 v v 8 7 6 . 6 6 v v 7 7 8 . 6 6 v v 8 8; BS 5 7 7 v 7 v 8 . v v
L3 L3.23 60 51 8 0 SR 7 7 v v 7 8 7 v 7 7 v v 7 7 8 v 9 7 v v 7.5 8 8 v 7 5 v 6 6 7.8 6.5 v v v 280; AW 7 8 8 7 8 . 6 6 v v 7 8 8 . 4 7 6 v 8 6; BS 6 5 v 6 6 v 8 . v 110; CL 7 7
L3 L3.24 60 51 8 0 SR v 7 7 v 8 8 8 v 6 6 v v 7 8 8 v 7 7 v v 7.5 8 8 v 4 6 6 v 7 7.5 7.5 v v v 226; AU 6 4 v 7 7 6 8 . 4 6 6 v 7 8 8 . 6 7 v v 7 6; BS 7 6 v v 7 v 8 . v 109; CL 9 8
L3 L3.25 27 0 0 0 0 . 6 4 . 7 7 8 v 4 4 5 4 6 5 7 . 6 3 v 5 7.5 7 8 . 5 3 6 . 0 7.5 7.6 v; AS 6
L3 L3.26 0 0 0 0 0; N 4`;

function buildGrades() {
  const count = labels.length;
  const widths = labels.map((_, i) => special[columnName(i)] || 24);
  let html = colgroup([25, ...widths]) + '<tr><th class="corner"></th>';
  for (let i = 0; i < count; i++) {
    const name = columnName(i);
    html += `<th class="col${name === "BV" ? " picked" : ""}">${name}</th>`;
  }
  html += '</tr><tr><th class="row">1</th>' +
    groups.map(([t, n, plain]) => `<td class="group${plain ? " plain" : ""}" colspan="${n}">${t}</td>`).join("") +
    '</tr><tr><th class="row">2</th>';
  labels.forEach((t, i) => {
    const size = widths[i] > 30 ? "big" : widths[i] > 24 ? "mid" : "";
    const icon = t === "ID"
      ? '<svg class="sort" viewBox="0 0 24 24"><path d="M2 14h11l-5.500 6zM17 20V7h-3l4-5 4 5h-3v13z"/></svg>'
      : '<svg viewBox="0 0 12 7" preserveAspectRatio="none"><path d="M0 0h12L6 7z"/></svg>';
    html += `<td class="label${i < 7 ? " plain" : ""}"><div class="head"><span class="side">${t}</span>` +
      `<button class="filter ${size}" aria-label="Filter ${t}">${icon}</button></div></td>`;
  });
  html += "</tr>";
  grades.split("\n").forEach((line, r) => {
    const cells = Array(count).fill("");
    line.split("; ").forEach((part, k) => {
      const values = part.split(" ");
      const start = k ? columnIndex(values.shift()) : 0;
      values.forEach((v, j) => { if (v !== ".") cells[start + j] = v; });
    });
    html += `<tr><th class="row">${r + 3}</th>` +
      cells.map(v => /^[0-9.]+$/.test(v) ? `<td class="num">${v}</td>` : `<td>${v}</td>`).join("") + "</tr>";
  });
  document.getElementById("grades").innerHTML = html;
}

/* ---- Normalised results ---- */
const period = n => [`T${n}.1`, `H${n}.1`, `T${n}.2`, `H${n}.2`, "PG versl", "PG pres", "PG ind"];
const resultLabels = ["Lichting", "ID", ...period(1), ...period(2), ...period(3), ...period(4)];
const edges = ["B", "D", "F", "I", "K", "M", "P", "R", "T", "W", "Y", "AA", "AD"];
const results = `L2.1 nd
L2.10 nd
L2.11 nd
L2.12 v E:o
L2.13 v
L2.14 nd
L2.15 v E:o S:nd T:o
L2.16 nd
L2.17 nd
L2.18 nd
L2.19 v
L2.2 v
L2.20 v
L2.21 nd
L2.24 nd
L2.25 nd
L2.26 nd
L2.27 nd
L2.3 nd
L2.30 v C:o
L2.31 nd
L2.32 nd
L2.33 nd
L2.34 nd
L2.39 v E:o
L2.4 v L:o
L2.40 nd
L2.41 nd
L2.5 nd
L2.6 nd
L2.7 nd
L2.8 nd
L2.9 v S:nd T:nd Z:nd AA:nd
L3.1 v C:nd E:nd J:o K:o L:o S:o AA:o
L3.10 v J:o L:o S:o Z:o
L3.11 v M:o S:o X:o Z:o
L3.12 v L:o S:o
L3.13 v L:o S:o
L3.14 v`;

function buildResults() {
  const edge = i => edges.includes(columnName(i)) ? " edge" : "";
  let html = colgroup([47, 44, 69, ...Array(28).fill(44), 0]) + '<tr><th class="corner"></th>';
  resultLabels.forEach((_, i) => { html += `<th class="col${i ? "" : " picked"}">${columnName(i)}</th>`; });
  html += '<th class="col"></th></tr><tr><th class="row picked">1</th>';
  resultLabels.forEach((t, i) => {
    const tone = i < 2 ? (i ? "plain" : "plain current") : "b" + (1 + Math.floor((i - 2) / 7));
    html += `<td class="label ${tone}${edge(i)}"><div class="head"><span class="side">${t}</span></div></td>`;
  });
  html += "<td></td></tr>";
  results.split("\n").forEach((line, r) => {
    const [id, fill, ...changes] = line.split(" ");
    const cells = Array(28).fill(fill);
    changes.forEach(c => { const [name, v] = c.split(":"); cells[columnIndex(name) - 2] = v; });
    html += `<tr><th class="row">${r + 2}</th><td>${id.slice(0, 2)}</td><td class="edge">${id}</td>` +
      cells.map((v, j) => `<td class="${v}${edge(j + 2)}">${v}</td>`).join("") + "<td></td></tr>";
  });
  document.getElementById("results").innerHTML = html;
}

buildGrades();
buildResults();
```
